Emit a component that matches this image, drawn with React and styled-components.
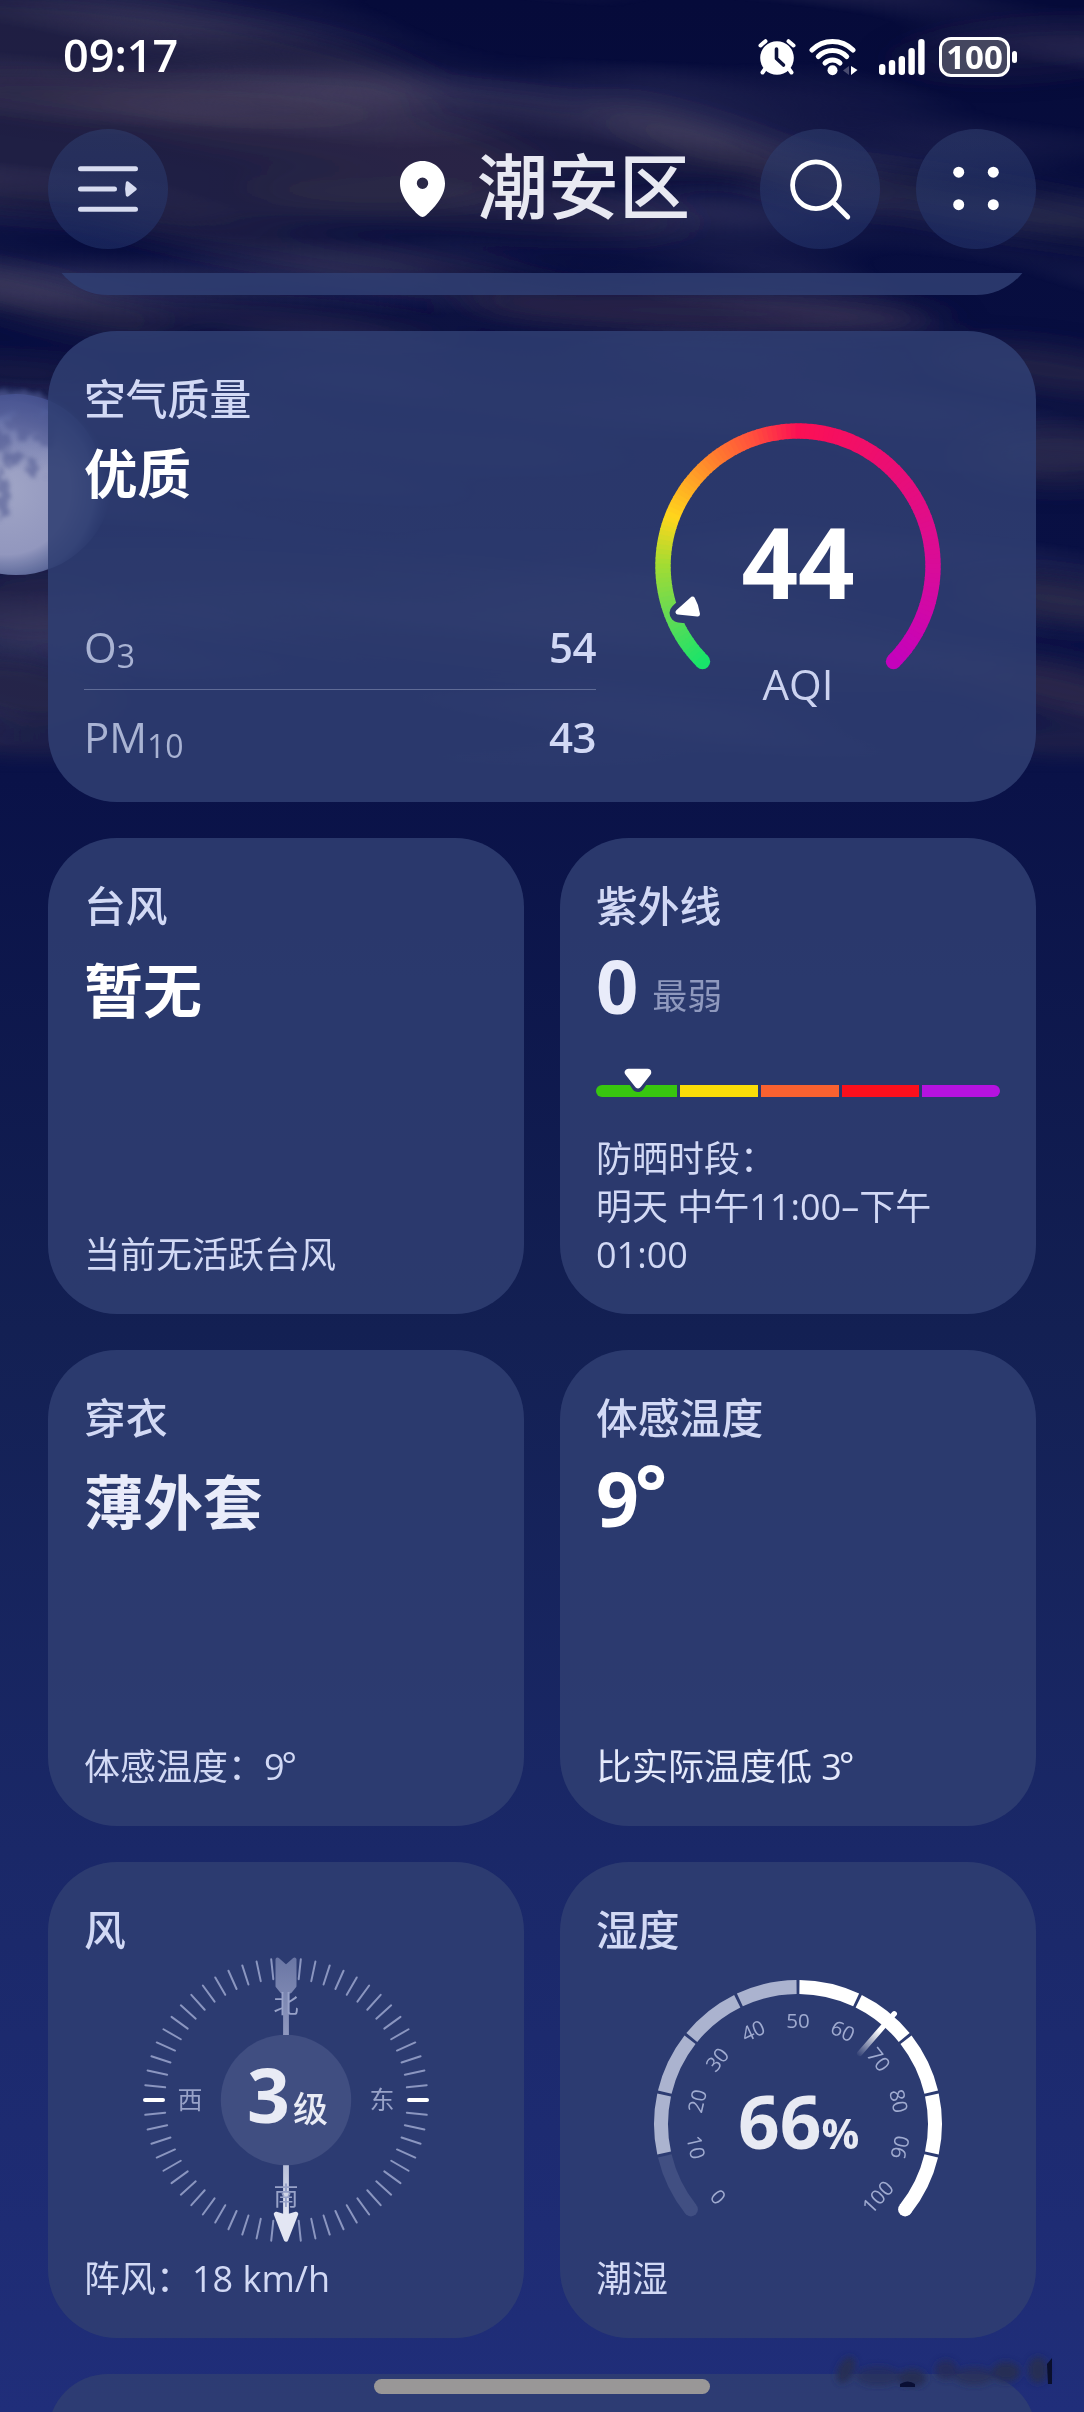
import styled, { createGlobalStyle } from "styled-components";

const GlobalStyle = createGlobalStyle`
  * {
    box-sizing: border-box;
  }

  body {
    margin: 0;
    background: #0a1248;
    color: #d2d9f5;
    font-family: "Open Sans", "Noto Sans CJK SC", sans-serif;
  }
`;

const Screen = styled.div`
  position: relative;
  display: flex;
  flex-direction: column;
  width: 1084px;
  height: 2412px;
  overflow: hidden;
  background: linear-gradient(#060b3a 0, #0a1248 780px, #132053 1330px, #1a2868 1850px, #202e7a 2412px);
`;

const SkyLayer = styled.svg`
  position: absolute;
  top: 0;
  left: 0;
`;

const StatusBar = styled.div`
  position: relative;
  display: flex;
  justify-content: space-between;
  height: 112px;
  padding: 24px 67px 0 63px;
`;

const Clock = styled.span`
  font-size: 45px;
  line-height: 62px;
  font-weight: 600;
  color: #fff;
`;

const StatusIcons = styled.div`
  display: flex;
  align-items: center;
  height: 66px;

  svg {
    display: block;
  }

  svg + svg {
    margin-left: 12px;
  }

  svg:nth-of-type(3) {
    margin-left: 20px;
  }
`;

const Battery = styled.div`
  display: flex;
  align-items: center;
  gap: 2px;
  margin-left: 14px;

  &::after {
    content: "";
    width: 5px;
    height: 12px;
    border-radius: 3px;
    background: #fff;
  }
`;

const BatteryLevel = styled.div`
  width: 71px;
  height: 40px;
  border: 3px solid #fff;
  border-radius: 12px;
  background: #44465f;
  color: #fff;
  font-size: 33px;
  line-height: 33px;
  font-weight: 700;
  text-align: center;
`;

const Header = styled.div`
  position: relative;
  display: flex;
  align-items: flex-start;
  height: 161px;
  padding: 17px 48px 0;
`;

const RoundButton = styled.button`
  display: flex;
  align-items: center;
  justify-content: center;
  width: 120px;
  height: 120px;
  margin: 0 0 0 ${(props) => props.$gap || 0}px;
  padding: 0;
  border: 0;
  border-radius: 50%;
  background: linear-gradient(rgba(48, 64, 112, 0.55), rgba(34, 50, 106, 0.6));
`;

const Place = styled.div`
  display: flex;
  align-items: center;
  gap: 32px;
  height: 120px;
  margin-left: auto;
  margin-right: 70px;
`;

const PlaceName = styled.h1`
  margin: -7px 0 0;
  color: #e8e9f2;
  font-size: 71px;
  line-height: 90px;
  font-weight: 500;
`;

const Content = styled.div`
  position: relative;
  flex: 1;
  display: flex;
  flex-direction: column;
  gap: 36px;
  padding: 0 48px;
  overflow: hidden;
`;

const Card = styled.section`
  flex: none;
  display: flex;
  flex-direction: column;
  height: 476px;
  padding: 46px 36px 35px;
  border-radius: 69px;
  background: rgba(47, 62, 114, 0.87);
`;

const PeekCard = styled(Card)`
  height: 200px;
  margin-top: ${(props) => props.$pull || 0}px;
  border-radius: 60px;
`;

const AirCard = styled(Card)`
  flex-direction: row;
  align-items: flex-start;
  height: 471px;
  padding-bottom: 18px;
`;

const AirInfo = styled.div`
  display: flex;
  flex-direction: column;
  width: 512px;
  height: 100%;
`;

const CardGrid = styled.div`
  display: grid;
  grid-template-columns: 476px 476px;
  gap: 36px;
`;

const Title = styled.h2`
  margin: 0;
  font-size: 41.8px;
  line-height: 44px;
  font-weight: 500;
`;

const Value = styled.div`
  margin-top: ${(props) => (props.$number ? 28 : 32)}px;
  color: ${(props) => (props.$soft ? "#e9ecfa" : "#fff")};
  font-size: ${(props) => props.$size || 59}px;
  line-height: 60px;
  font-weight: 700;
`;

const AirValue = styled(Value)`
  margin-top: 23px;
`;

const Level = styled.span`
  position: relative;
  top: -5px;
  margin-left: 14px;
  color: #8f99be;
  font-size: 35px;
  font-weight: 400;
`;

const Degree = styled.span`
  position: relative;
  top: -8px;
  left: -4px;
`;

const SmallDegree = styled.span`
  position: relative;
  top: -2px;
  left: -3px;
`;

const Footer = styled.p`
  margin: auto 0 0;
  color: ${(props) => (props.$bright ? "#e4e9fb" : "#d2d9f5")};
  font-size: 36px;
  line-height: 48px;
`;

const Pollutant = styled.div`
  display: flex;
  align-items: center;
  justify-content: space-between;
  height: ${(props) => props.$height}px;
  margin-top: ${(props) => (props.$first ? "auto" : 0)};
  border-bottom: ${(props) => (props.$first ? "1px solid #5f6b96" : "none")};
  font-size: 42px;
  line-height: 60px;
`;

const PollutantName = styled.span`
  color: #a9b3d3;

  sub {
    font-size: 32px;
    line-height: 0;
    vertical-align: -5px;
  }
`;

const PollutantValue = styled.span`
  font-weight: 600;
  letter-spacing: -0.5px;
`;

const AqiGauge = styled.svg`
  margin: 39px 0 0 52px;
`;

const UvScale = styled.div`
  position: relative;
  display: flex;
  gap: 3px;
  width: 404px;
  height: 12px;
  margin-top: 54px;
`;

const UvBand = styled.span`
  flex: 1;
  background: ${(props) => props.$color};

  &:first-of-type {
    flex: 0 0 81px;
    border-radius: 6px 0 0 6px;
  }

  &:last-of-type {
    border-radius: 0 6px 6px 0;
  }
`;

const UvMarker = styled.svg`
  position: absolute;
  top: -20px;
  left: 24px;
`;

const Dial = styled.svg`
  align-self: center;
  margin-top: ${(props) => props.$top}px;
`;

const HomeBar = styled.div`
  position: absolute;
  left: 374px;
  bottom: 18px;
  width: 336px;
  height: 15px;
  border-radius: 8px;
  background: #999797;
`;

const Smudge = styled.svg`
  position: absolute;
  right: 20px;
  bottom: 16px;
`;

// [x, y, rx, ry, rotation, opacity]
const CLOUDS = [
  [100, 60, 330, 60, 6, 0.5],
  [120, 150, 420, 70, 3, 0.5],
  [430, 130, 330, 45, 5, 0.38],
  [740, 155, 150, 20, 20, 0.55],
  [1030, 50, 130, 26, -4, 0.25],
  [980, 205, 240, 22, 10, 0.45],
  [470, 205, 220, 26, 5, 0.4],
  [330, 255, 230, 18, 9, 0.4],
  [40, 300, 140, 20, 14, 0.6],
  [700, 312, 240, 20, 2, 0.7],
  [290, 322, 170, 14, 5, 0.4],
  [1050, 370, 120, 22, 8, 0.55],
  [20, 372, 90, 12, 4, 0.4],
  [1060, 455, 90, 32, 0, 0.5],
  [20, 610, 100, 34, 5, 0.55],
  [20, 690, 100, 34, 8, 0.6],
  [20, 745, 90, 16, 4, 0.5],
  [1060, 600, 100, 22, 8, 0.75],
  [1060, 690, 110, 26, 12, 0.7],
  [1060, 745, 90, 16, 4, 0.5],
  [500, 620, 500, 50, 6, 0.35],
];

const CRATERS = [
  [10, 404, 40, 12],
  [30, 426, 22, 12],
  [14, 458, 12, 7],
  [2, 494, 7, 26],
  [34, 468, 9, 6],
  [0, 440, 10, 12],
  [48, 430, 10, 18],
];

const Sky = () => (
  <SkyLayer width="1084" height="830" viewBox="0 0 1084 830">
    <defs>
      <filter id="soft" x="-50%" y="-150%" width="200%" height="400%">
        <feGaussianBlur stdDeviation="24 12" />
      </filter>
      <filter id="grain" x="0" y="0" width="100%" height="100%">
        <feTurbulence type="fractalNoise" baseFrequency="0.0022 0.014" numOctaves="2" seed="11" />
        <feColorMatrix values="0 0 0 0 0.19  0 0 0 0 0.165  0 0 0 0 0.28  2.4 0 0 0 -1.05" />
      </filter>
      <filter id="rough" x="-30%" y="-30%" width="160%" height="160%">
        <feTurbulence type="fractalNoise" baseFrequency="0.11" numOctaves="4" seed="4" result="n" />
        <feDisplacementMap in="SourceGraphic" in2="n" scale="22" xChannelSelector="R" yChannelSelector="G" />
        <feGaussianBlur stdDeviation="2" />
      </filter>
      <radialGradient id="moonFill" cx="0.45" cy="0.56" r="0.54">
        <stop offset="0" stopColor="#a0a5c6" />
        <stop offset="0.62" stopColor="#9297be" />
        <stop offset="0.84" stopColor="#6673a4" stopOpacity="0.9" />
        <stop offset="1" stopColor="#3a4a88" stopOpacity="0" />
      </radialGradient>
      <linearGradient id="moonShade" x1="0" y1="0" x2="0" y2="1">
        <stop offset="0" stopColor="#46559a" stopOpacity="0.75" />
        <stop offset="0.45" stopColor="#46559a" stopOpacity="0" />
      </linearGradient>
      <linearGradient id="edge" x1="0" y1="0" x2="0" y2="1">
        <stop offset="0.96" stopColor="#fff" />
        <stop offset="1" stopColor="#000" />
      </linearGradient>
      <mask id="skyEnd">
        <rect width="1084" height="774" fill="url(#edge)" />
      </mask>
    </defs>
    <g mask="url(#skyEnd)">
      <g filter="url(#soft)">
        {CLOUDS.map(([x, y, rx, ry, turn, alpha], i) => (
          <ellipse
            key={i}
            cx={x}
            cy={y}
            rx={rx}
            ry={ry}
            fill="#37314c"
            opacity={alpha}
            transform={`rotate(${turn} ${x} ${y})`}
          />
        ))}
      </g>
      <g transform="rotate(5 542 380)">
        <rect x="-100" y="-80" width="1300" height="940" filter="url(#grain)" opacity="0.3" />
      </g>
    </g>
    <circle cx="16" cy="478" r="97" fill="url(#moonFill)" />
    <circle cx="16" cy="480" r="86" fill="url(#moonShade)" />
    <g filter="url(#rough)" opacity="0.55">
      {CRATERS.map(([x, y, rx, ry], i) => (
        <ellipse key={i} cx={x} cy={y} rx={rx} ry={ry} fill="#4d5790" />
      ))}
    </g>
  </SkyLayer>
);

const AlarmIcon = () => (
  <svg width="40" height="38" viewBox="0 0 40 38">
    <circle cx="20" cy="20" r="16.8" fill="#fff" />
    <path
      d="M3.5 7.5L8.5 3.2M36.5 7.5L31.5 3.2M8 31L5.5 34.5M32 31L34.5 34.5"
      stroke="#fff"
      strokeWidth="4"
      strokeLinecap="round"
    />
    <path d="M19.5 11v9.5l7 6.5" fill="none" stroke="#0d123c" strokeWidth="3.6" strokeLinecap="round" strokeLinejoin="round" />
  </svg>
);

const WifiIcon = () => (
  <svg width="50" height="38" viewBox="0 0 50 38">
    <g fill="none" stroke="#fff" strokeWidth="5" strokeLinecap="round">
      <path d="M3 12a29 29 0 0 1 41 0" />
      <path d="M9.3 18.5a20 20 0 0 1 28.4 0" />
      <path d="M16 25a10.8 10.8 0 0 1 15 0" />
    </g>
    <circle cx="23.5" cy="32.3" r="5" fill="#fff" />
    <path d="M40 28v9l-6-4.5z" fill="#4a4c70" />
    <path d="M42 28v9l6.5-5z" fill="#fff" />
  </svg>
);

const SIGNAL_HEIGHTS = [11, 15, 19, 27, 36];

const SignalIcon = () => (
  <svg width="46" height="36" viewBox="0 0 46 36" fill="#fff">
    {SIGNAL_HEIGHTS.map((h, i) => (
      <rect key={h} x={i * 9.8} y={36 - h} width="6.4" height={h} rx="3" />
    ))}
  </svg>
);

const MenuIcon = () => (
  <svg width="60" height="46" viewBox="0 0 60 46">
    <path d="M2.5 2.7h55M2.5 23h34M2.5 43.2h55" stroke="#d7dcf0" strokeWidth="5" strokeLinecap="round" />
    <path d="M49.5 17l7.5 6-7.5 6q-1.3-6 0-12z" fill="#d7dcf0" stroke="#d7dcf0" strokeWidth="3.5" strokeLinejoin="round" />
  </svg>
);

const PinIcon = () => (
  <svg width="45" height="56" viewBox="0 0 45 56">
    <path
      d="M22.5 0C10 0 0 9.8 0 22.4 0 36 12 47.5 18.8 54.3q3.7 3.4 7.4 0C33 47.5 45 36 45 22.4 45 9.8 35 0 22.5 0zm0 16.6a5.7 5.7 0 1 1 0 11.4 5.7 5.7 0 0 1 0-11.4z"
      fill="#fff"
      fillRule="evenodd"
    />
  </svg>
);

const SearchIcon = () => (
  <svg width="120" height="120" viewBox="0 0 120 120" fill="none" stroke="#fff" strokeWidth="4.8" strokeLinecap="round">
    <circle cx="56" cy="56.2" r="23.4" />
    <path d="M72.8 73l15 15" />
  </svg>
);

const MoreIcon = () => (
  <svg width="120" height="120" viewBox="0 0 120 120" fill="#fff">
    <circle cx="42.7" cy="43.2" r="5.5" />
    <circle cx="77.3" cy="43.2" r="5.5" />
    <circle cx="42.7" cy="75.7" r="5.5" />
    <circle cx="77.3" cy="75.7" r="5.5" />
  </svg>
);

// angle is in degrees, clockwise from twelve o'clock
const polar = (cx, cy, r, angle) => {
  const a = (angle * Math.PI) / 180;
  return [cx + r * Math.sin(a), cy - r * Math.cos(a)];
};

const arc = (cx, cy, r, from, to) => {
  const [x1, y1] = polar(cx, cy, r, from);
  const [x2, y2] = polar(cx, cy, r, to);
  return `M${x1} ${y1}A${r} ${r} 0 0 1 ${x2} ${y2}`;
};

const AQI_STOPS = [
  [0, [24, 228, 106]],
  [0.1, [110, 218, 80]],
  [0.17, [164, 220, 50]],
  [0.245, [255, 214, 28]],
  [0.36, [255, 126, 46]],
  [0.43, [255, 78, 62]],
  [0.5, [252, 16, 84]],
  [0.66, [234, 14, 116]],
  [0.84, [216, 12, 154]],
  [1, [196, 2, 188]],
];

const aqiColor = (t) => {
  const i = Math.max(1, AQI_STOPS.findIndex(([stop]) => stop >= t));
  const [a, from] = AQI_STOPS[i - 1];
  const [b, to] = AQI_STOPS[i];
  const k = (t - a) / (b - a);
  return `rgb(${from.map((c, n) => Math.round(c + (to[n] - c) * k)).join()})`;
};

const AQI_STEPS = 135;

const Aqi = ({ value }) => (
  <AqiGauge width="300" height="300" viewBox="0 0 300 300">
    <mask id="aqiCut">
      <rect width="300" height="300" fill="#fff" />
      <path d="M44.5 184L31 197l19 2z" fill="#000" stroke="#000" strokeWidth="19" strokeLinejoin="round" />
    </mask>
    <g mask="url(#aqiCut)">
      <circle cx="54.5" cy="245.5" r="7.7" fill={aqiColor(0)} />
      <circle cx="245.5" cy="245.5" r="7.7" fill={aqiColor(1)} />
      {Array.from({ length: AQI_STEPS }, (_, i) => (
        <path
          key={i}
          d={arc(150, 150, 135, -135 + i * 2, Math.min(135, -135 + i * 2 + 2.4))}
          fill="none"
          stroke={aqiColor((i + 0.5) / AQI_STEPS)}
          strokeWidth="15.4"
        />
      ))}
    </g>
    <path d="M44.5 183L30 196l19.5 2q-1-8-5-15z" fill="#fff" stroke="#fff" strokeWidth="5" strokeLinejoin="round" />
    <text x="150" y="183" fill="#fff" fontSize="99" fontWeight="700" textAnchor="middle">
      {value}
    </text>
    <text x="150" y="284" fill="#ccd3f0" fontSize="42" textAnchor="middle">
      AQI
    </text>
  </AqiGauge>
);

const Compass = ({ level }) => (
  <Dial $top={4} width="300" height="288" viewBox="-150 -144 300 288">
    <defs>
      <linearGradient id="tail" gradientUnits="userSpaceOnUse" x1="0" y1="-143" x2="0" y2="-65">
        <stop offset="0" stopColor="#6a76a4" />
        <stop offset="1" stopColor="#8f98bf" />
      </linearGradient>
      <linearGradient id="head" gradientUnits="userSpaceOnUse" x1="0" y1="65" x2="0" y2="115">
        <stop offset="0" stopColor="#b9c0da" />
        <stop offset="1" stopColor="#e3e6f3" />
      </linearGradient>
    </defs>
    {Array.from({ length: 60 }, (_, i) => i)
      .filter((i) => i % 30 !== 0)
      .map((i) => {
        const main = i % 15 === 0;
        const [x1, y1] = polar(0, 0, main ? 123 : 121.5, i * 6);
        const [x2, y2] = polar(0, 0, main ? 141 : 141.5, i * 6);
        return (
          <line
            key={i}
            x1={x1}
            y1={y1}
            x2={x2}
            y2={y2}
            stroke={main ? "#fff" : "#8b96c0"}
            strokeWidth={main ? 4 : 2}
            strokeLinecap="round"
          />
        );
      })}
    <circle r="65.2" fill="#404e81" />
    <path d="M-2.9 -108h5.8v43h-5.8z" fill="url(#tail)" />
    <path
      d="M-8.5 -140.5L0 -133L8.5 -140.5V-114L4 -108.5H-4L-8.5 -114z"
      fill="url(#tail)"
      stroke="url(#tail)"
      strokeWidth="4"
      strokeLinejoin="round"
    />
    <path d="M-2.9 65.2h5.8v50h-5.8z" fill="url(#head)" />
    <path d="M0 139.5L-10 114L0 117L10 114z" fill="#e3e6f3" stroke="#e3e6f3" strokeWidth="4.5" strokeLinejoin="round" />
    <g fill="#98a2c8" fontSize="25" textAnchor="middle">
      <text x="0" y="-87">
        北
      </text>
      <text x="0" y="105">
        南
      </text>
      <text x="-96" y="9">
        西
      </text>
      <text x="96" y="9">
        东
      </text>
    </g>
    <text x="-39" y="22.5" fill="#e9ebf5" fontSize="75" fontWeight="700">
      {level}
    </text>
    <text x="7" y="22" fill="#e9ebf5" fontSize="35" fontWeight="500">
      级
    </text>
  </Dial>
);

const HUMIDITY_STEP = 360 / 14;

const humidityColor = (i) => {
  if (i === 0) return "#414f82";
  return i < 5 ? "#abb3cf" : "#fff";
};

const Humidity = ({ value }) => {
  const needle = (value / 10 - 5) * HUMIDITY_STEP;
  const [startX, endY] = polar(0, 0, 137, -5 * HUMIDITY_STEP);

  return (
    <Dial $top={22} width="300" height="260" viewBox="-150 -150 300 260">
      <defs>
        <linearGradient id="needle" gradientUnits="userSpaceOnUse" x1="0" y1="-90" x2="0" y2="-124">
          <stop offset="0" stopColor="#fff" stopOpacity="0" />
          <stop offset="1" stopColor="#fff" />
        </linearGradient>
      </defs>
      <circle cx={startX} cy={endY} r="7" fill={humidityColor(0)} />
      <circle cx={-startX} cy={endY} r="7" fill={humidityColor(9)} />
      {Array.from({ length: 10 }, (_, i) => (
        <path
          key={i}
          d={arc(
            0,
            0,
            137,
            (i - 5) * HUMIDITY_STEP + (i ? 0.6 : 0),
            (i - 4) * HUMIDITY_STEP - (i < 9 ? 0.6 : 0)
          )}
          fill="none"
          stroke={humidityColor(i)}
          strokeWidth="14"
        />
      ))}
      {Array.from({ length: 11 }, (_, i) => {
        const angle = (i - 5) * HUMIDITY_STEP * (i % 10 ? 1 : 1.03);
        const [x, y] = polar(0, 0, i % 10 ? 104 : 107.5, angle);
        const turn = Math.abs(angle) > 90 ? angle + 180 : angle;
        return (
          <text
            key={i}
            transform={`translate(${x} ${y}) rotate(${turn})`}
            y="8"
            fill="#a0abd0"
            fontSize="20.5"
            textAnchor="middle"
          >
            {i * 10}
          </text>
        );
      })}
      <rect x="-2.7" y="-149" width="5.4" height="58" rx="2.7" fill="url(#needle)" transform={`rotate(${needle})`} />
      <text x="-60" y="24.5" fill="#e8eaf3" fontSize="73" fontWeight="700">
        {value}
        <tspan fontSize="42">%</tspan>
      </text>
    </Dial>
  );
};

const UV_COLORS = ["#38c60f", "#fadd08", "#f96130", "#fb0f1c", "#b612e0"];

const App = () => {
  return (
    <Screen>
      <GlobalStyle />
      <Sky />
      <StatusBar>
        <Clock>09:17</Clock>
        <StatusIcons>
          <AlarmIcon />
          <WifiIcon />
          <SignalIcon />
          <Battery>
            <BatteryLevel>100</BatteryLevel>
          </Battery>
        </StatusIcons>
      </StatusBar>
      <Header>
        <RoundButton aria-label="菜单">
          <MenuIcon />
        </RoundButton>
        <Place>
          <PinIcon />
          <PlaceName>潮安区</PlaceName>
        </Place>
        <RoundButton aria-label="搜索">
          <SearchIcon />
        </RoundButton>
        <RoundButton $gap={36} aria-label="更多">
          <MoreIcon />
        </RoundButton>
      </Header>
      <Content>
        <PeekCard $pull={-178} />
        <AirCard>
          <AirInfo>
            <Title>空气质量</Title>
            <AirValue $size={53.5}>优质</AirValue>
            <Pollutant $first $height={86}>
              <PollutantName>
                O<sub>3</sub>
              </PollutantName>
              <PollutantValue>54</PollutantValue>
            </Pollutant>
            <Pollutant $height={94}>
              <PollutantName>
                PM<sub>10</sub>
              </PollutantName>
              <PollutantValue>43</PollutantValue>
            </Pollutant>
          </AirInfo>
          <Aqi value={44} />
        </AirCard>
        <CardGrid>
          <Card>
            <Title>台风</Title>
            <Value>暂无</Value>
            <Footer>当前无活跃台风</Footer>
          </Card>
          <Card>
            <Title>紫外线</Title>
            <Value $soft $number $size={74}>
              0<Level>最弱</Level>
            </Value>
            <UvScale>
              {UV_COLORS.map((color) => (
                <UvBand key={color} $color={color} />
              ))}
              <UvMarker width="36" height="32" viewBox="0 0 36 32">
                <path d="M8.5 6.5h19L18 20.5z" fill="#2b396d" stroke="#2b396d" strokeWidth="13" strokeLinejoin="round" />
                <path d="M8.5 7.5h19L18 19.5z" fill="#fff" stroke="#fff" strokeWidth="7.5" strokeLinejoin="round" />
              </UvMarker>
            </UvScale>
            <Footer>
              防晒时段：
              <br />
              明天 中午11:00–下午
              <br />
              01:00
            </Footer>
          </Card>
          <Card>
            <Title>穿衣</Title>
            <Value $soft $size={59.5}>
              薄外套
            </Value>
            <Footer>
              体感温度：9<SmallDegree>°</SmallDegree>
            </Footer>
          </Card>
          <Card>
            <Title>体感温度</Title>
            <Value $number $size={75}>
              9<Degree>°</Degree>
            </Value>
            <Footer $bright>
              比实际温度低 3<SmallDegree>°</SmallDegree>
            </Footer>
          </Card>
          <Card>
            <Title>风</Title>
            <Compass level={3} />
            <Footer>阵风：18 km/h</Footer>
          </Card>
          <Card>
            <Title>湿度</Title>
            <Humidity value={66} />
            <Footer>潮湿</Footer>
          </Card>
        </CardGrid>
        <PeekCard />
      </Content>
      <HomeBar />
      <Smudge width="240" height="46" viewBox="0 0 240 46">
        <filter id="smear">
          <feGaussianBlur stdDeviation="3" />
        </filter>
        <g filter="url(#smear)" fill="#272d55">
          <ellipse cx="22" cy="20" rx="8" ry="14" transform="rotate(25 22 20)" />
          <ellipse cx="54" cy="26" rx="22" ry="10" opacity="0.6" />
          <ellipse cx="88" cy="28" rx="14" ry="9" />
          <ellipse cx="122" cy="20" rx="11" ry="10" opacity="0.8" />
          <ellipse cx="150" cy="26" rx="20" ry="9" opacity="0.7" />
          <ellipse cx="182" cy="22" rx="14" ry="10" />
          <ellipse cx="214" cy="20" rx="10" ry="13" />
        </g>
        <path d="M76 34q8-5 15 0v3H76z" fill="#0a0f34" />
        <path d="M223 14l5-6v26h-4z" fill="#0a0f2c" />
      </Smudge>
    </Screen>
  );
};

export default App;
